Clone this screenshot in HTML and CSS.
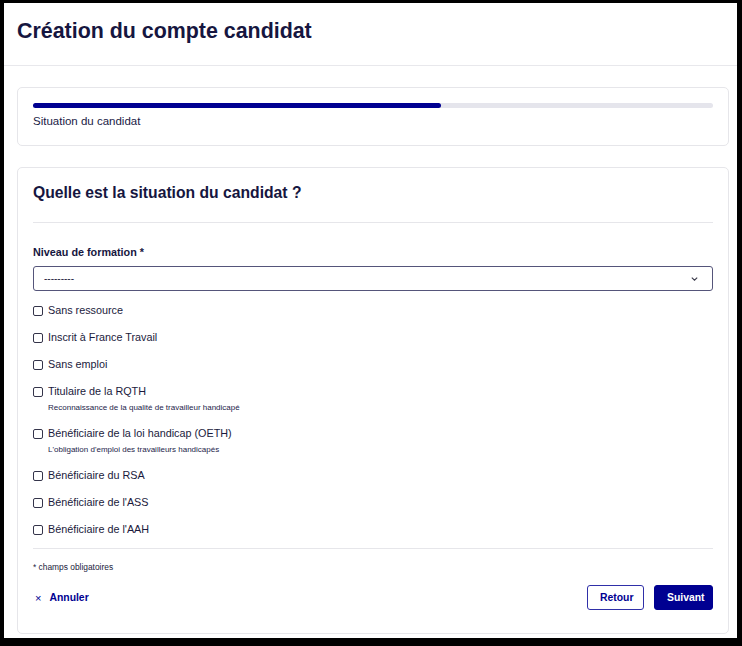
FILE: index.html
```html
<!DOCTYPE html>
<html lang="fr">
<head>
  <meta charset="UTF-8">
  <meta name="viewport" content="width=device-width, initial-scale=1.0">
  <title>Création du compte candidat</title>
  <link rel="stylesheet" href="styles.css">
</head>
<body>
  <div class="frame">
    <header class="page-header">
      <h1>Création du compte candidat</h1>
    </header>

    <main class="content">
      <section class="card stepper">
        <div class="track"><div class="track-fill" style="width: 60%"></div></div>
        <p class="step-title">Situation du candidat</p>
      </section>

      <section class="card form-card">
        <h2>Quelle est la situation du candidat ?</h2>
        <hr class="sep sep-title">

        <label class="field-label" for="niveau">Niveau de formation *</label>
        <div class="select-wrap">
          <select id="niveau">
            <option>---------</option>
          </select>
          <svg class="chevron" width="7" height="4" viewBox="0 0 7 4"><polyline points="0.8,0.6 3.5,3.2 6.2,0.6" fill="none" stroke="#3a3a4a" stroke-width="1.1"/></svg>
        </div>

        <ul class="checks">
          <li><label class="check"><input type="checkbox"> Sans ressource</label></li>
          <li><label class="check"><input type="checkbox"> Inscrit à France Travail</label></li>
          <li><label class="check"><input type="checkbox"> Sans emploi</label></li>
          <li class="with-hint">
            <label class="check"><input type="checkbox"> Titulaire de la RQTH</label>
            <p class="hint">Reconnaissance de la qualité de travailleur handicapé</p>
          </li>
          <li class="with-hint">
            <label class="check"><input type="checkbox"> Bénéficiaire de la loi handicap (OETH)</label>
            <p class="hint">L'obligation d'emploi des travailleurs handicapés</p>
          </li>
          <li><label class="check"><input type="checkbox"> Bénéficiaire du RSA</label></li>
          <li><label class="check"><input type="checkbox"> Bénéficiaire de l'ASS</label></li>
          <li><label class="check"><input type="checkbox"> Bénéficiaire de l'AAH</label></li>
        </ul>

        <hr class="sep">
        <p class="required-note">* champs obligatoires</p>

        <div class="actions">
          <a class="cancel" href="#"><span class="cancel-x">×</span>Annuler</a>
          <div class="nav-buttons">
            <button class="btn btn-secondary">Retour</button>
            <button class="btn btn-primary">Suivant</button>
          </div>
        </div>
      </section>
    </main>
  </div>
</body>
</html>
```

FILE: styles.css
```css
body {
  font-family: "Liberation Sans", Arial, sans-serif;
  color: #1a1a3c;
  margin: 0;
  padding: 0;
  background: #fff;
}

.frame {
  box-sizing: border-box;
  width: 742px;
  height: 646px;
  border-style: solid;
  border-color: #000;
  border-width: 3px 5px 8px 4px;
  overflow: hidden;
}

.page-header {
  padding: 15px 13px 21px;
  border-bottom: 1px solid #e8e8ec;
}
.page-header h1 {
  margin: 0;
  font-size: 21.4px;
  line-height: 26px;
  font-weight: bold;
  color: #161640;
}

.content {
  padding: 21px 8px 0 13px;
}

.card {
  border: 1px solid #e6e6ea;
  border-radius: 5px;
  background: #fff;
}

.stepper {
  padding: 15px 15px 16px;
}
.track {
  height: 5px;
  border-radius: 3px;
  background: #e5e5ec;
}
.track-fill {
  height: 5px;
  border-radius: 3px;
  background: #000091;
}
.step-title {
  margin: 5px 0 0;
  font-size: 11.5px;
  line-height: 16px;
  color: #1a1a46;
}

.form-card {
  margin-top: 21px;
  padding: 14px 15px 23px;
}
.form-card h2 {
  margin: 0;
  font-size: 15.7px;
  line-height: 22px;
  font-weight: bold;
  color: #161640;
}

.sep {
  border: 0;
  border-top: 1px solid #e6e6ea;
  margin: 0;
}
.sep-title {
  margin-top: 18px;
}

.field-label {
  display: block;
  margin-top: 21px;
  font-size: 10.8px;
  line-height: 16px;
  font-weight: bold;
  color: #161640;
}

.select-wrap {
  position: relative;
  margin-top: 6px;
}
.select-wrap select {
  display: block;
  box-sizing: border-box;
  width: 100%;
  height: 25px;
  padding: 0 10px;
  border: 1px solid #55557a;
  border-radius: 3px;
  background: #fff;
  font-family: inherit;
  font-size: 10px;
  color: #1a1a3c;
  appearance: none;
  -webkit-appearance: none;
}
.chevron {
  position: absolute;
  right: 15px;
  top: 11px;
}

.checks {
  list-style: none;
  margin: 11px 0 0;
  padding: 0;
}
.checks li {
  margin-bottom: 11px;
}
.checks li.with-hint {
  margin-bottom: 12px;
}
.check {
  display: flex;
  align-items: center;
  gap: 5px;
  font-size: 10.8px;
  line-height: 16px;
  color: #1a1a3c;
}
.check input {
  appearance: none;
  -webkit-appearance: none;
  box-sizing: border-box;
  width: 10px;
  height: 10px;
  margin: 1px 0 0;
  border: 1.3px solid #34344a;
  border-radius: 2px;
  background: #fff;
}
.hint {
  margin: 3px 0 0 15px;
  font-size: 8px;
  line-height: 11px;
  color: #24244a;
}

.required-note {
  margin: 13px 0 0;
  font-size: 8.4px;
  line-height: 11px;
  color: #1a1a3c;
}

.actions {
  display: flex;
  justify-content: space-between;
  align-items: center;
  margin-top: 12px;
}
.cancel {
  display: flex;
  align-items: center;
  padding-left: 2px;
  font-size: 10.4px;
  font-weight: bold;
  color: #000091;
  text-decoration: none;
}
.cancel-x {
  font-weight: normal;
  font-size: 11px;
  margin-right: 8px;
}
.nav-buttons {
  display: flex;
  gap: 10px;
}
.btn {
  box-sizing: border-box;
  height: 25px;
  padding: 0 12px;
  border-radius: 3px;
  font-family: inherit;
  font-size: 10.4px;
  font-weight: bold;
  cursor: pointer;
}
.btn-secondary {
  width: 57px;
  border: 1px solid #2f2fa8;
  background: #fff;
  color: #000091;
}
.btn-primary {
  width: 59px;
  border: 1px solid #000091;
  background: #000091;
  color: #fff;
}
```
